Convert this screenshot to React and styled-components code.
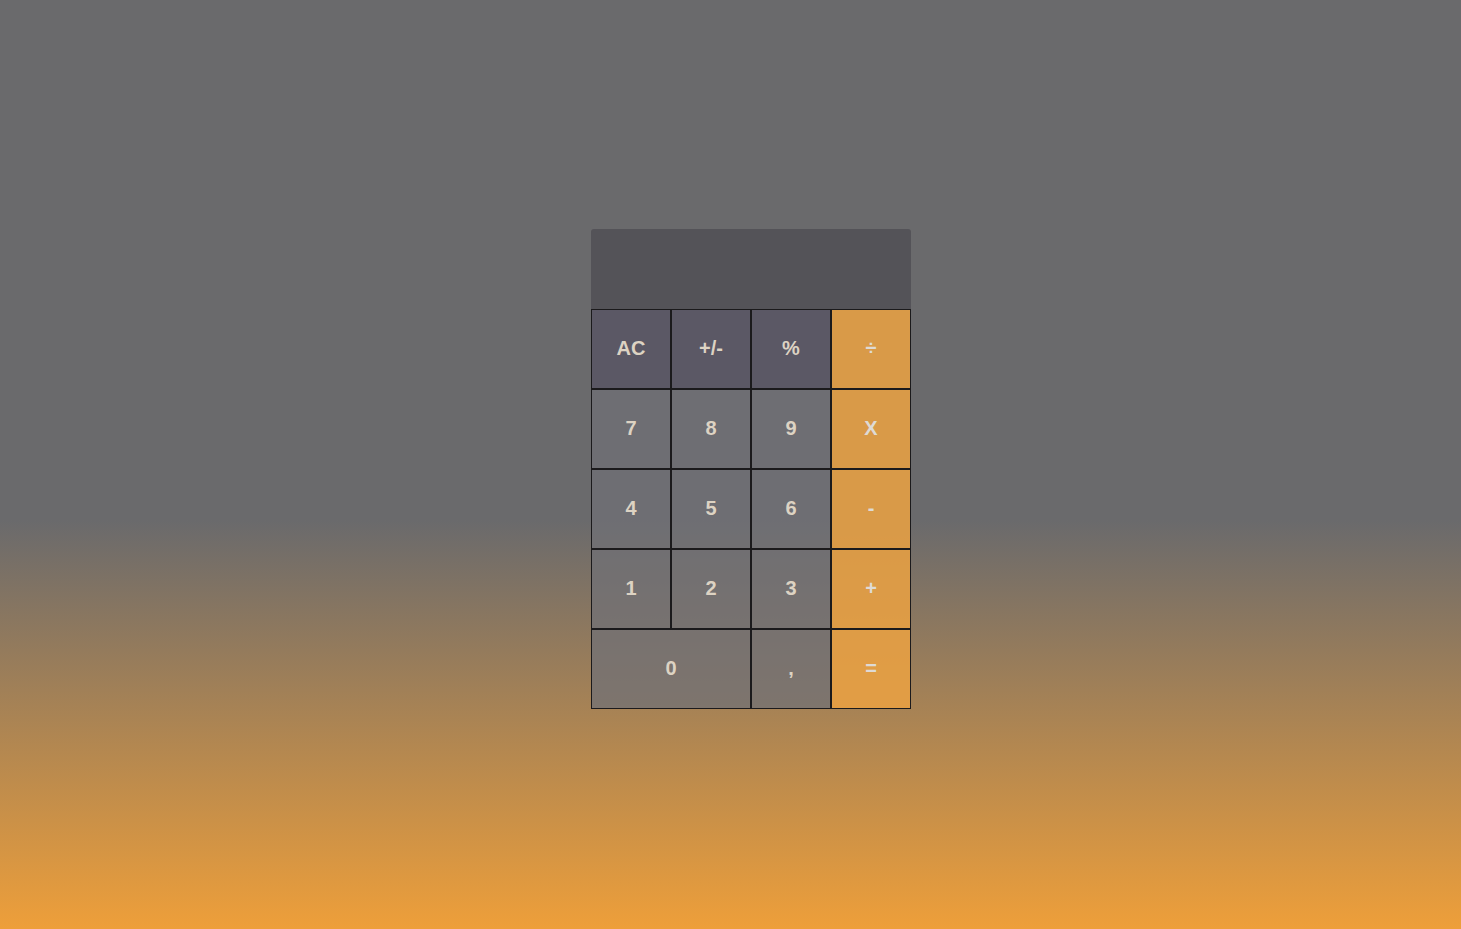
import React from "react";
import styled, { createGlobalStyle } from "styled-components";

const Global = createGlobalStyle`
  html, body { margin: 0; padding: 0; }
  body {
    min-height: 100vh;
    background: linear-gradient(to bottom, #6a6a6c 0%, #6a6a6c 56%, #ee9f3a 100%);
    font-family: "Liberation Sans", Arial, sans-serif;
  }
`;

const Page = styled.div`
  min-height: 100vh;
  box-sizing: border-box;
  padding: 9px 0 0 41px;
  display: flex;
  align-items: center;
  justify-content: center;
`;

const Calculator = styled.div`
  width: 320px;
  display: flex;
  flex-direction: column;
`;

const Display = styled.div`
  height: 80px;
  background: #545358;
  border-radius: 3px 3px 0 0;
  color: #ddd3c3;
  display: flex;
  align-items: flex-end;
  justify-content: flex-end;
  padding: 0 16px;
  font-size: 40px;
`;

const Keys = styled.div`
  display: grid;
  grid-template-columns: repeat(4, 80px);
  grid-auto-rows: 80px;
`;

const variants = {
  fn: { bg: "#5b5865", color: "#ddd3c3" },
  num: { bg: "rgba(112, 112, 117, 0.75)", color: "#ddd3c3" },
  op: { bg: "rgba(236, 162, 66, 0.85)", color: "#dedad5" },
};

const Key = styled.button`
  box-sizing: border-box;
  margin: 0;
  padding: 0 0 2px;
  border: 1px solid #1b1a1c;
  border-radius: 0;
  background: ${(p) => variants[p.$kind].bg};
  color: ${(p) => variants[p.$kind].color};
  font-family: "Liberation Sans", Arial, sans-serif;
  font-size: 20px;
  font-weight: 700;
  grid-column: span ${(p) => p.$span || 1};
  display: flex;
  align-items: center;
  justify-content: center;
  cursor: pointer;
  outline: none;
`;

const keys = [
  ["AC", "fn"], ["+/-", "fn"], ["%", "fn"], ["÷", "op"],
  ["7", "num"], ["8", "num"], ["9", "num"], ["X", "op"],
  ["4", "num"], ["5", "num"], ["6", "num"], ["-", "op"],
  ["1", "num"], ["2", "num"], ["3", "num"], ["+", "op"],
  ["0", "num", 2], [",", "num"], ["=", "op"],
];

export default function App() {
  return (
    <>
      <Global />
      <Page>
        <Calculator>
          <Display />
          <Keys>
            {keys.map(([label, kind, span]) => (
              <Key key={label} $kind={kind} $span={span}>
                {label}
              </Key>
            ))}
          </Keys>
        </Calculator>
      </Page>
    </>
  );
}
